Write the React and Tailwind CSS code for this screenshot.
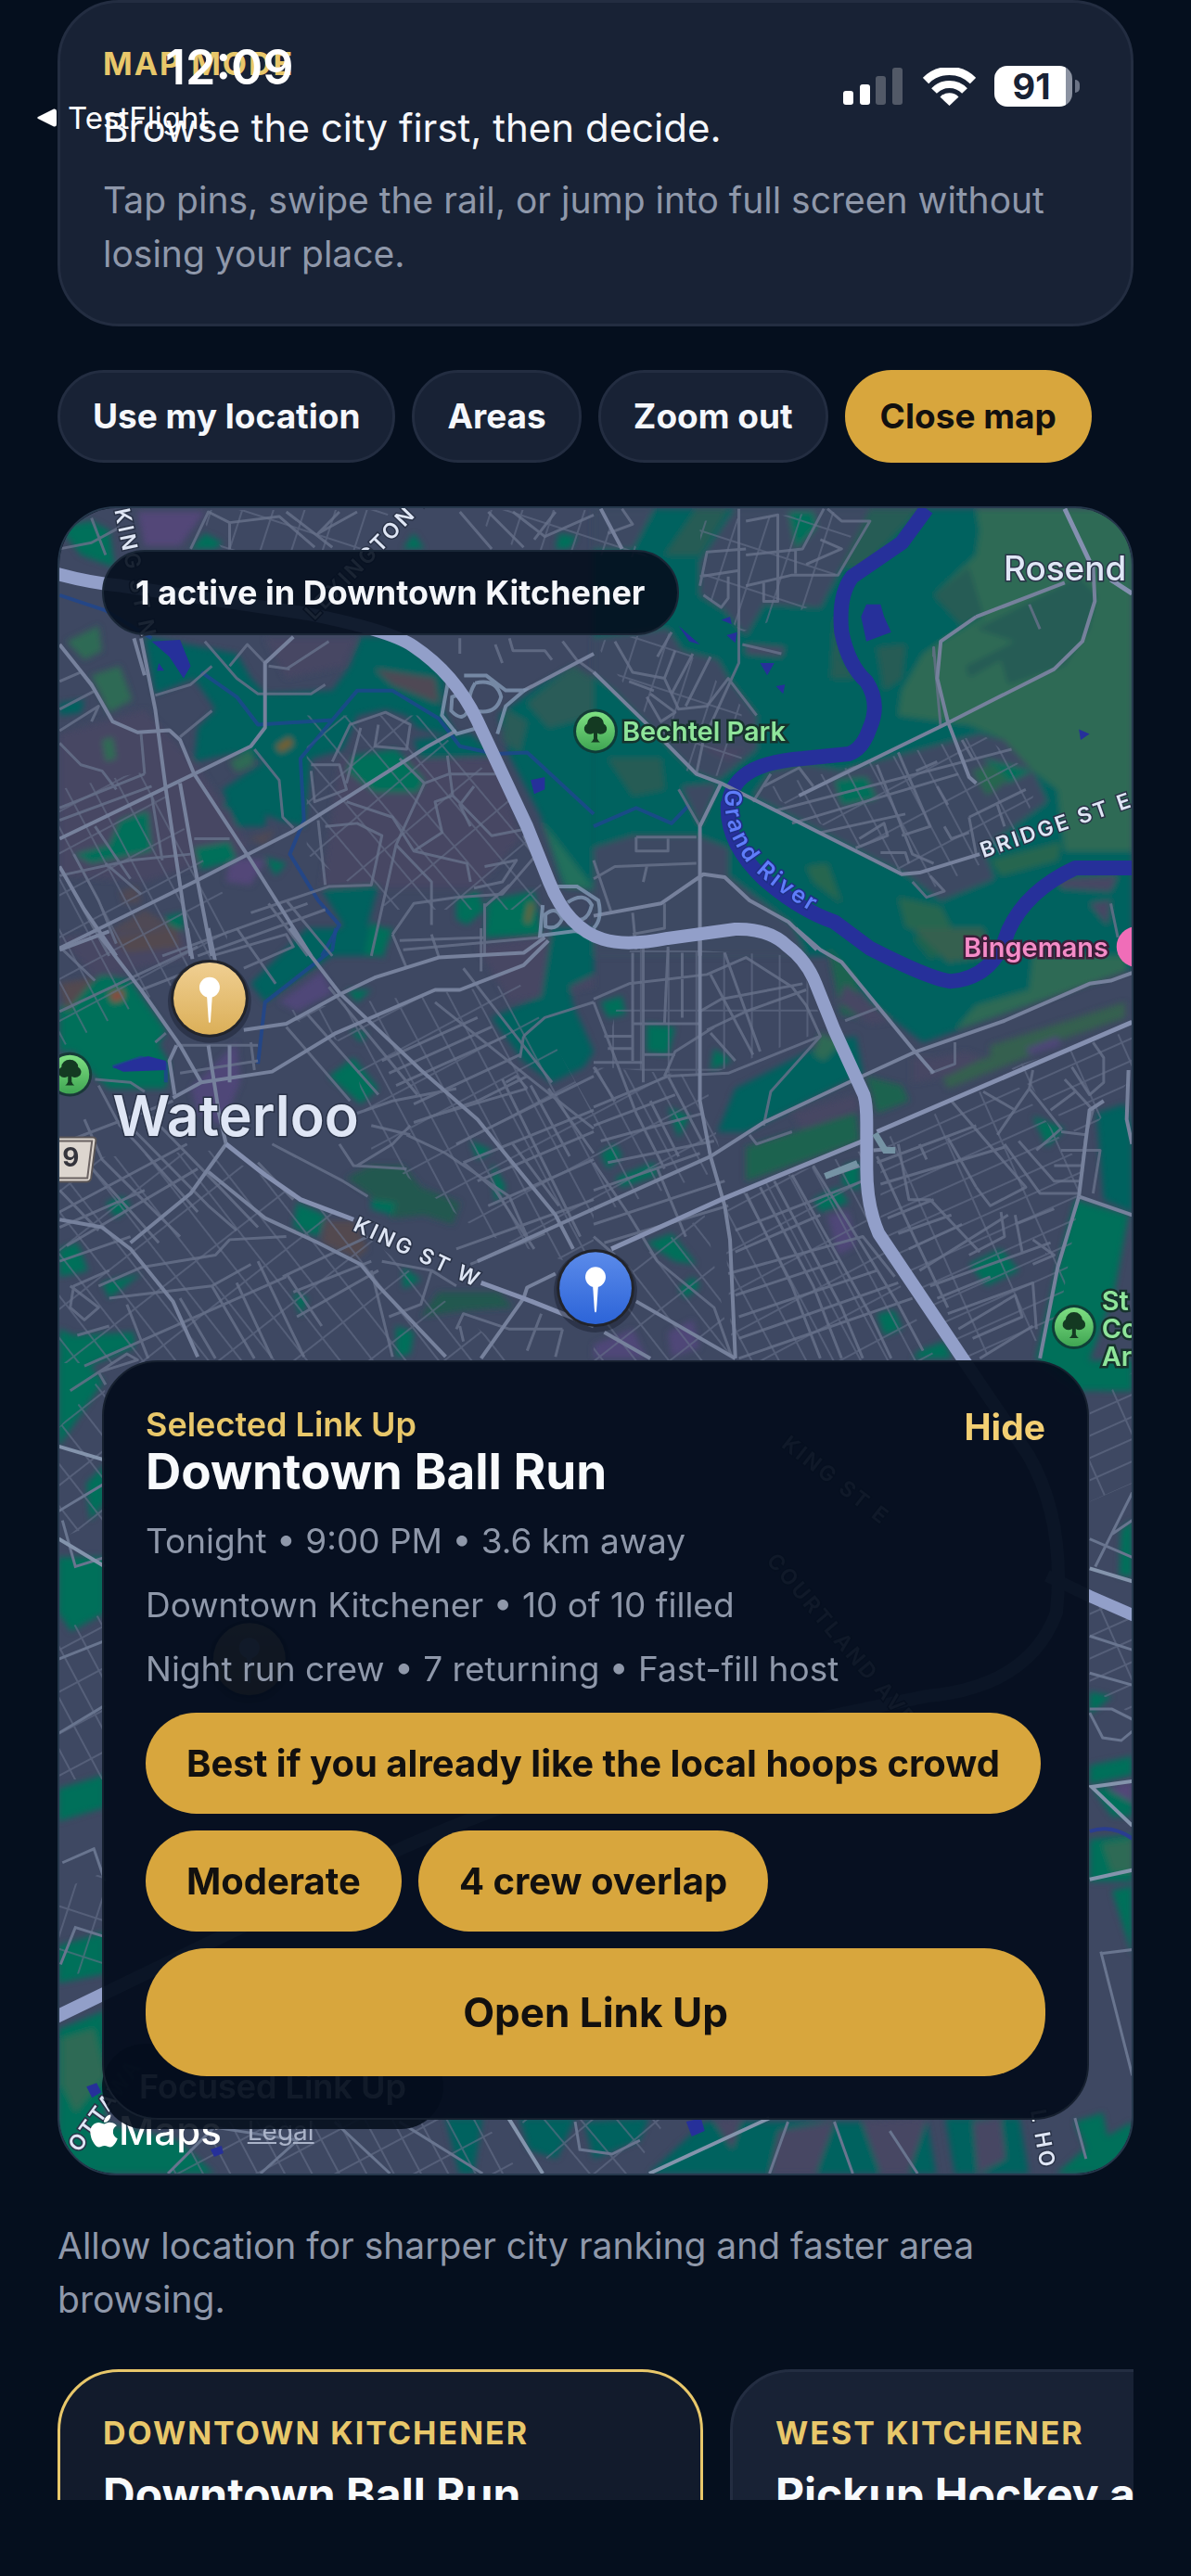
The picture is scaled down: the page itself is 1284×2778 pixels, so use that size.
import React from "react";
import { FaApple } from "react-icons/fa";

/* Each map tile is drawn on its own 1568 x 1500 grid and placed on the canvas. */
const TILES = {
  nw: "translate(40 530) scale(0.3827 0.3333)",
  ne: "translate(640 530) scale(0.3827 0.3333)",
  sw: "translate(40 1000) scale(0.3827 0.3333)",
  se: "translate(640 1000) scale(0.3827 0.3333)",
};

const TEAL = "#04625e";
const GREEN = "#06705a";
const FARM = "#2f6b55";
const SLATE = "#3e4862";
const MAUVE = "#464763";

const AREAS = {
  nw: [
    [MAUVE, "M60 780 L300 700 L460 900 L600 1150 L300 1260 L60 1240Z M640 470 L900 470 L860 560 L700 600Z M850 860 L1300 860 L1360 1120 L1240 1280 L800 1280Z"],
    ["#524678", "M280 60 H470 L400 170 H300Z M540 1180 L640 1190 L600 1270 L530 1260Z"],
    [GREEN, "M60 110 L150 90 L200 120 L215 240 L120 200Z M470 130 L520 160 L500 180 H430Z M1060 130 L1090 180 H1030Z M1470 130 L1520 140 L1500 180 H1460Z"],
    [TEAL, "M300 465 L560 520 L600 600 L640 650 L830 640 L880 560 L910 465 H1010 L1150 590 L1140 700 L1180 790 L1070 760 L1040 720 L980 700 L900 720 L860 830 L770 860 L750 1080 L680 1060 L600 1020 L520 1020 L560 930 L640 870 L560 840 L440 870 L450 760 L500 700 L440 600 L330 650Z"],
    [TEAL, "M1300 720 L1420 620 L1510 560 L1568 600 V1290 L1480 1270 L1420 1050 L1330 850Z"],
    [GREEN, "M890 850 L1010 830 L1090 930 L1070 970 L950 970 L870 900Z"],
    [TEAL, "M800 1285 L960 1270 L930 1400 L980 1500 H800 L860 1400Z M1060 800 L1220 780 L1290 850 L1080 860Z"],
    [GREEN, "M1270 1320 L1400 1290 L1420 1430 L1260 1440Z M1180 1320 L1240 1290 L1260 1350 L1210 1400 L1180 1380Z M940 1390 L990 1420 L970 1500 H920Z"],
    [GREEN, "M230 1060 L310 1030 L320 1160 L150 1200 L100 1170 L200 1140Z M440 1150 L540 1130 L560 1190 L460 1220Z M640 1180 L700 1200 L670 1240Z M360 1370 L410 1360 L410 1420 L370 1410Z"],
    [TEAL, "M520 960 L600 900 L650 930 L640 1080 L560 1080Z M60 680 L130 670 L120 710 L60 720Z"],
    [FARM, "M80 480 L170 430 L180 510 L130 540Z M150 590 L230 560 L265 670 L200 710Z M540 870 L600 830 L610 880 L560 905Z M180 800 L210 790 L220 860 L190 870Z"],
    ["#2b5c58", "M1380 680 L1510 560 L1568 600 V720 L1440 760Z M1320 700 L1380 740 L1360 840 L1310 800Z"],
    ["#4f4a55", "M200 1420 L300 1350 L400 1420 L300 1500 H210Z M590 1120 L670 1090 L640 1140Z M950 570 L1120 600 L1130 680 L1000 620Z M230 1290 L280 1270 L290 1330 L240 1330Z"],
    ["#24705c", "M1420 1060 L1568 1280 H1490Z"],
    ["#75602f", "M670 820 L710 790 L720 815 L685 840Z M1375 1390 L1385 1330 L1398 1330 L1385 1395Z"],
  ],
  ne: [
    [TEAL, "M0 50 H1520 V1500 H0Z"],
    [SLATE, "M0 50 H170 L110 180 H0Z M300 220 L400 50 H780 L690 260 L640 370 L480 360 L430 460 L370 380 L300 330Z"],
    [SLATE, "M0 470 L210 440 L250 510 L350 540 L380 600 L460 720 L460 830 L350 930 L280 900 L60 640 L0 590Z"],
    [SLATE, "M450 980 L500 900 L600 880 L700 900 L1090 780 L1160 800 L1240 900 L1280 1000 L1100 1150 L1130 1250 L980 1320 L890 1240Z"],
    [SLATE, "M0 1150 L110 1110 L290 1110 L380 1150 L380 1240 L560 1400 L600 1500 H0Z M250 950 L350 940 L300 1080Z"],
    [FARM, "M1080 50 H1520 V1160 L1330 1160 L1310 960 L1240 900 L1160 800 L1060 750 L860 720 L870 640 L930 520 L980 480 L1100 400 L960 330 L1080 200 L1090 120Z"],
    ["#265c55", "M1080 440 L1370 270 L1420 330 L1400 440 L1330 560 L1170 620 L1150 540 L1060 600 L1050 560 L1190 480Z M960 330 L1060 240 L1100 390 L1040 430Z M200 200 L290 50 H380 L300 200Z"],
    ["#265c55", "M800 500 L880 490 L870 600 L820 640Z M40 860 L190 860 L200 960 L110 980Z M680 380 L700 540 L740 600 L670 600Z M780 50 H920 L760 240 L700 240Z"],
    [GREEN, "M550 60 H620 L630 110 L570 180Z M1100 860 L1240 900 L1170 940Z M680 930 L770 920 L800 990 L700 1010Z"],
    ["#28664f", "M1070 900 L1130 880 L1170 930 L1110 980Z M600 1210 L660 1200 L700 1330 L620 1260Z M860 1310 L980 1340 L1050 1500 H920 L880 1400Z M1120 1190 L1320 1130 L1310 1190 L1150 1240Z"],
    [MAUVE, "M1310 1250 L1480 1240 L1460 1290 L1320 1280Z M1400 1330 L1460 1320 L1450 1400Z M430 490 L540 500 L530 530 L430 520Z M300 820 L430 830 L380 870Z"],
  ],
  sw: [
    [MAUVE, "M60 30 L400 0 L440 90 L160 160Z M1240 60 L1568 0 V190 L1330 240Z"],
    ["#504678", "M680 240 L800 140 L830 210 L730 270Z"],
    [GREEN, "M60 260 L180 150 L260 170 L360 330 L340 380 L370 440 L360 520 L200 520 L160 480 L100 400 L60 400Z"],
    [TEAL, "M760 0 H860 L840 80 L700 190 L640 240 L600 180Z M1450 0 H1568 V150 L1500 190 L1510 250 L1568 400 L1540 450 L1450 500 L1370 430 L1280 290 L1420 220Z"],
    [GREEN, "M820 480 L890 420 L960 520 L910 570Z M870 200 L940 200 L900 240Z M930 0 H1000 L970 100Z M880 330 L930 340 L910 370Z M1220 690 L1280 720 L1240 750Z M1280 760 L1320 840 L1290 890Z"],
    ["#24594f", "M870 810 L940 770 L1030 770 L1080 840 L1190 890 L1170 960 L1090 930 L1000 940 L930 860Z M1130 1180 L1300 1180 L1340 1230 L1200 1240 L1080 1260Z"],
    [GREEN, "M940 880 L1010 890 L1000 930 L940 910Z M730 890 L810 930 L790 1000 L720 970Z M190 890 L240 870 L260 900 L220 940Z M1030 1100 L1080 1140 L1030 1170Z"],
    [GREEN, "M60 1300 L100 1320 L270 1310 L270 1360 L160 1410 L90 1500 H60Z M60 1040 L110 1020 L140 1110 L60 1130Z M180 1150 L290 1120 L200 1200Z M720 1180 L760 1200 L740 1260Z M1010 1290 L1060 1310 L1050 1380 L1010 1390Z"],
    ["#524a50", "M60 180 L160 160 L80 270Z M810 950 L890 950 L930 1040 L900 1070 L800 1020Z M210 30 L390 0 L400 60 L250 80Z"],
    ["#504678", "M430 520 L560 370 L570 500 L520 640 L450 600Z"],
    ["#8a4a3c", "M200 210 L240 200 L240 230 L210 240Z"],
  ],
  se: [
    [TEAL, "M560 0 H1520 V130 L930 370 L780 240 L660 70Z M350 660 L400 520 L640 380 L740 350 L760 470 L430 660Z M1420 600 L1500 570 L1520 650 V920 L1440 880Z"],
    ["#1d6350", "M660 60 L740 160 L760 290 L700 280Z M430 710 L740 600 L750 690 L430 820Z M770 480 L870 510 L890 560 L800 600Z M900 30 L1050 0 L1050 60 L950 100Z"],
    [FARM, "M1020 330 L1080 250 L1230 200 L1240 90 L1500 90 L1500 140Z M640 340 L700 370 L650 430 L620 410Z"],
    ["#35604f", "M1120 380 L1500 240 L1500 290 L1120 440Z M980 470 L1240 370 V410 L1000 520Z M900 0 L1100 0 L1120 90 L1000 110Z"],
    [MAUVE, "M900 420 L960 420 L1050 400 L1100 420 L1000 480 L900 500Z M560 600 L740 540 L750 590 L590 650Z M710 180 L840 300 L780 310 L690 240Z"],
    ["#4f4678", "M1220 390 L1310 350 L1320 380 L1230 410Z M660 930 L720 920 L740 1030 L690 1060Z M210 1310 L280 1270 L300 1360 L220 1390Z M0 1350 L110 1300 L150 1395 H0Z"],
    [GREEN, "M60 810 L170 760 L180 800 L80 840Z M20 730 L60 700 L80 740 L40 780Z M150 1020 L220 990 L290 1090 L230 1080Z M620 880 L690 840 L720 890 L640 920Z M1060 1090 L1150 1040 L1200 1110 L1110 1160Z"],
    [GREEN, "M1360 880 L1510 930 L1470 1180 L1400 1400 L1520 1440 V1500 H1370 L1250 1395 L1320 1050Z M1240 610 L1330 650 L1280 710Z M150 310 L230 320 L210 410 L150 400Z M340 390 L390 430 L330 460Z M920 1370 L990 1340 L1010 1395 H900Z"],
    [GREEN, "M210 580 L270 610 L240 680Z M240 1170 L280 1130 L300 1160 L260 1200Z M800 1250 L850 1240 L870 1300 L820 1320Z M20 240 L80 220 L90 280 L40 290Z M710 770 L750 760 V850 L700 830Z"],
  ],
};

/* [pattern, polygon] pairs: neighbourhoods filled with a street grid, canvas units. */
const BLOCKS = [
  ["streets-a", "62,850 160,830 250,980 240,1030 62,1130"],
  ["streets-c", "210,548 420,548 400,592 240,592"],
  ["streets-c", "500,548 640,548 700,600 560,592"],
  ["streets-d", "330,770 450,770 560,860 590,980 420,980 330,920"],
  ["streets-b", "62,1250 230,1240 380,1320 560,1470 62,1470"],
  ["streets-a", "300,1090 560,1060 640,1200 640,1370 520,1330 400,1240 380,1130"],
  ["streets-c", "754,560 930,548 900,620 880,650 800,680 760,640"],
  ["streets-c", "640,690 720,680 800,760 800,840 740,830"],
  ["streets-a", "820,850 1060,790 1120,840 1100,910 1000,960 960,930"],
  ["streets-e", "680,1020 860,1030 890,1110 760,1160 650,1150"],
  ["streets-a", "640,1150 760,1160 780,1260 640,1310"],
  ["streets-a", "780,1290 930,1240 940,1320 1010,1467 790,1467"],
  ["streets-f", "950,1230 1090,1160 1170,1260 1140,1440 1040,1467 950,1330"],
  ["streets-b", "640,1390 760,1310 790,1467 640,1467"],
  ["streets-f", "1090,1150 1222,1110 1222,1160 1170,1230"],
  ["streets-b", "62,1540 112,1480 112,1640 62,1660"],
  ["streets-a", "62,1760 112,1740 112,1920 62,1920"],
  ["streets-c", "62,2040 112,2020 112,2130 62,2130"],
  ["streets-f", "1176,1520 1222,1480 1222,1600 1176,1620"],
  ["streets-f", "1176,1730 1222,1740 1222,1850 1176,1820"],
  ["streets-a", "180,2346 230,2290 520,2286 560,2346"],
  ["streets-d", "560,2286 720,2286 680,2346 600,2346"],
];

const WATER = {
  nw: "M60 330 L190 380 L320 470 M460 580 L560 660 L620 750 L830 735 L900 640 L1000 640 L1130 730 L1190 820 L1290 845 L1380 840 L1568 1040 M830 735 L740 860 L750 1060 L710 1170 L790 1320 L850 1400 L800 1500",
  ne: "M0 1080 L120 1020 L220 1070 L270 1010",
  sw: "M840 0 L830 70 L640 240 L620 440 M210 450 L290 420 L360 440 L360 500",
};

const LOCAL_ROADS = {
  nw: [
    "M60 180 L150 160 L230 110 M150 80 L190 200 M430 180 L480 60 L540 95 L680 75 L780 175 M540 180 V95 M700 60 L830 175 M850 60 L790 130 L900 60",
    "M470 480 L560 600 L620 650 H770 L810 620 M540 560 L590 490 L640 550 M700 570 L820 480 M650 560 L710 570 M330 655 L430 620 L490 560 M400 790 L490 705",
    "M60 610 L120 580 L160 640 L60 700 M60 770 L170 690 L150 740 M60 810 L120 880 L180 900 L220 960 M60 1020 L300 910 M60 1060 L320 950 M290 780 L300 910",
    "M610 830 L680 930 L690 1050 L720 1085 M770 880 L850 880 L870 960 L780 1000 L770 900 M830 870 L880 750 L980 710 L1050 750 L1040 830 L950 820 L960 750 M870 940 L910 760",
    "M1020 860 L1090 940 L1160 910 H1290 M1155 850 L1170 980 L1120 1000 L1140 1100 L1060 1160 M1090 940 L1010 1140 L940 1500 M1170 980 L1280 1110 L1370 1090 M1230 950 L1190 1010 L1220 1080",
    "M790 1060 L810 1270 M870 1000 L1000 1050 L1060 1160 L1210 1200 L1220 1260 M810 1080 L900 1070 L970 1110 L940 1270 L820 1275 L600 1360 M1010 1140 L1110 1260 L1110 1400 M1260 1210 L1350 1190 L1310 1260 L1230 1280 M1370 1110 L1400 1180 L1310 1300 L1180 1310 L1060 1330 L1000 1430",
    "M60 1240 L260 1190 L430 1170 M100 1170 L170 1320 L220 1460 M190 1200 L290 1300 M160 1080 L260 1250 M320 980 L350 1190 M60 1210 L200 1500 M350 1500 L760 1330 M450 1500 L810 1350 M650 1330 L760 1500 M700 1320 L830 1500 M440 1120 H540",
    "M1190 60 L1280 180 M1270 60 L1370 175 M1340 60 L1430 140 L1568 70 M1400 150 L1460 60 M1480 480 L1520 540 L1568 580 M1190 470 V520 M1290 490 L1310 550 M1330 470 L1340 510 H1430 L1450 540",
    "M1260 1330 V1500 M1020 1450 L1260 1440 M1330 1270 L1260 1340 M1030 1480 L1420 1440",
  ],
  ne: [
    "M410 50 V550 L310 800 L290 910 M80 50 L110 100 L40 130 M300 270 L410 250 M300 300 L320 190 L430 180 M430 90 L520 70 V350 H480 V290 M430 200 L590 180 L650 50 M430 300 L560 265 H690 L780 90 H700 L660 50 M570 180 V260 M640 150 L700 180 L600 230 M310 330 L360 370 L380 340 V270",
    "M60 480 L110 580 L200 600 L240 700 L320 690 L380 600 L460 720 M100 610 L170 640 M180 530 L220 450 M230 510 L200 600 M280 520 L220 650 M330 530 L260 690 M160 650 L230 710 L190 740 L150 660 M420 490 L530 520",
    "M480 950 L580 890 L620 950 M450 1000 L500 910 M510 1030 L1180 830 M560 1070 L1030 910 M640 1100 L880 1040 M800 880 L900 1170 L960 1200 M860 840 L950 1080 L870 1110 M910 900 L970 870 M1040 800 L1070 860 M970 950 L1000 1010 M1060 1050 L1220 960 M1060 1050 L1080 1170 M1140 1010 L1160 1080 M750 1120 L820 1070 L830 1110 L740 1150 M810 1165 H880 L890 1200 M990 1080 L1010 1120 L1060 1100",
    "M120 1115 H290 M120 1115 V1160 H210 V1120 M0 1250 L60 1210 L290 1200 M150 1210 L140 1260 M0 1190 L50 1360 M240 960 L300 1080 M110 1360 L120 1480 M200 1330 V1410 L110 1430 M900 1260 L940 1310 L990 1290 L950 1240 M960 530 V500 L980 760 M1230 360 L1260 440 M1460 1330 L1480 1440",
  ],
  sw: [
    "M60 60 L160 170 M60 270 L450 60 M290 200 L470 120 M490 90 L700 20 L720 60 L580 130 M560 0 L670 180 M330 370 L360 340 M390 380 H620 M400 470 L620 430 M600 370 L610 460 M160 490 L260 500 L300 530",
    "M60 700 L380 560 M60 920 L420 700 M60 970 L300 850 M80 1030 L450 780 M60 1080 L260 1000 M170 1160 L290 1100 L500 1060 L540 1010 L700 1000 M110 1320 L200 1290 M200 1200 L490 1160 L600 1090 M130 1420 L700 1130 M90 1500 L250 1380 L280 1400 L170 1440 L190 1480",
    "M170 510 L230 640 L280 700 L450 920 M240 620 L480 900 L560 980 M300 590 L520 850 L620 970 M130 620 L180 750 L400 1000 M90 700 L340 1020 M60 850 L170 980 M90 1160 L170 1230 L130 1270 L90 1230 L100 1160 L200 1110 M250 1220 L310 1395 M400 1200 L500 1395 M490 1160 L610 1395 M560 1150 L660 1395",
    "M660 700 L860 820 L930 870 M620 760 L720 880 M850 700 L890 770 L1040 780 M1050 640 L1000 700 L900 770 M1060 630 L1240 560 L1380 480 M1040 670 L1150 730 L1330 870 L1380 1000 M900 600 L1000 560 L1180 520 M940 640 L1050 670",
    "M820 190 L1070 540 M760 280 L960 540 M700 320 L880 560 M1120 240 L1380 480 L1568 650 M1200 130 L1450 500 M970 430 L1240 290 M990 470 L1280 320 M1010 510 L1320 350 M1060 570 L1360 410 M1110 610 L1380 520 M1000 20 L1040 130 M1110 20 L1130 90 M1250 0 V140",
    "M1180 700 L1568 480 M1200 760 L1568 590 M1240 820 L1568 660 M1270 900 L1568 750 M1180 1040 L1568 880 M1220 1090 L1430 990 M1310 490 L1400 700 L1530 1000 M1390 510 L1500 740 M1320 500 L1350 480 L1380 520 M1440 520 L1568 730 M1200 760 L1290 850 L1400 1040 M1340 700 L1470 900",
    "M690 1130 L930 1000 M720 1180 L940 1080 M730 1260 L960 1110 M700 1120 L800 1290 M940 1110 L1000 1390 M1180 1300 L1200 1250 L1330 1300 L1480 1300 M1200 1340 L1190 1290 M970 1080 L1110 1110 L1180 1160 M990 1260 L1080 1220 L1110 1110 M1420 1250 L1380 1370 M1480 1300 L1460 1390 M620 1080 L750 1390 M1370 350 L1430 290 L1568 240 M1360 420 L1370 350",
  ],
  se: [
    "M0 230 L100 180 L320 150 L430 95 L560 190 L600 250 L640 350 L500 530 L480 640 M110 80 V430 M140 60 V500 M210 60 L200 310 M250 80 V290 M110 310 H300 M140 410 H230 M30 350 H110 M40 390 H110 M0 435 H140",
    "M0 240 L120 600 L200 780 M0 450 L60 560 M210 480 L310 700 M160 560 L240 740 M210 480 L380 470 L640 350 M300 270 L360 230 L590 180 M320 330 L430 270 L600 200 M330 150 L450 410 M370 80 L470 400 M330 340 L400 430 M200 480 L230 400 L340 320",
    "M0 580 L210 480 M0 640 L230 540 M20 690 L310 600 M40 760 L340 690 M0 850 L300 730 M0 960 L370 820 M30 1020 L380 900 M0 760 L100 930 L180 1080 L340 1230 L390 1390 M180 780 L260 1000 M0 1000 L60 1060",
    "M430 860 L560 1160 L640 1395 M470 840 L620 1160 L700 1395 M510 820 L700 1230 L760 1395 M560 800 L780 1250 L840 1395 M620 770 L860 1220 L930 1370 M400 980 L760 820 M400 1050 L640 930 M380 1120 L760 1000 L850 1130 M400 1190 L690 1080 M410 1260 L800 1110 M410 1330 L860 1150 M410 1395 L900 1200",
    "M800 740 L900 990 L1000 1230 M860 700 L890 880 L950 880 L1090 1050 M920 700 L940 750 M1000 680 L1080 840 M800 760 L1080 640 M810 830 L1160 710 M830 940 L960 880 M860 990 L1010 930 M890 1040 L1040 960 M920 1110 L1170 930 M950 1160 L1290 1020 M970 1200 L1120 1130 M1000 1250 L1240 1150 L1250 1300",
    "M1160 700 L1260 860 H1370 M1200 690 L1300 820 H1370 M1010 560 L1220 840 L1120 900 L1080 840 M1100 530 L1190 590 M1240 460 L1230 520 L1140 670 M1230 520 L1320 650 L1250 720 M1330 490 L1410 590 L1390 670 L1320 660 M1290 590 L1360 530 M1350 450 L1400 540 L1440 500 V420 L1410 370 M1320 720 H1430 L1410 860 M1390 670 L1370 860 M1300 770 H1380",
    "M1030 1300 L1190 1190 L1210 1260 L1070 1330 M1150 920 L1160 1000 L1060 1060 M1190 930 L1210 1050 M1300 910 L1190 960 M1240 1010 L1300 1060 L1240 1090 M1090 1395 L1240 1290 M950 470 L1020 440 V370 M440 670 L460 700 L560 660 M710 300 L800 260",
  ],
};

const MAIN_ROADS = {
  nw: [
    "M60 490 L150 620 L210 740 L280 775 L370 768 L400 800 L440 910 L600 1190 L770 1500",
    "M290 470 L330 700 L360 960 L430 1500 M400 940 L440 1200 L490 1500 M270 470 L300 590",
    "M60 1120 L440 910 L600 820 L640 760 V550 L720 465",
    "M60 1475 L440 1260 L720 1095 L880 980 L1100 820 L1180 770",
    "M60 1210 L130 1350 L220 1500 M1370 640 L1568 520",
  ],
  ne: [
    "M20 50 L80 180 M0 580 L170 770 L290 910 L360 940 L430 980 L870 1235 L920 1230 L1090 1170",
    "M360 940 L300 1080 V1500 M0 1370 L190 1330 L310 1235 L370 1245 L440 1320 L550 1390 L630 1480",
    "M1080 400 L980 480 L970 600 L1000 740 M580 980 L990 750 L1300 570 L1380 480 L1415 350 L1410 230 M1330 290 L1080 400 M1000 740 L1060 920 L1080 940",
  ],
  sw: [
    "M60 70 L200 10 M170 20 L290 200 L400 380 L460 500 M420 0 L435 100 M480 0 L500 110",
    "M710 0 L850 210 L1080 460 L1240 620 L1310 720 L1460 930 L1510 1040",
    "M580 330 L700 310 L850 215 L950 160 L1130 95 L1370 80 L1430 30",
    "M380 550 L460 500 L660 465 L840 340 L1120 200 L1190 200 L1370 120 L1440 40",
    "M390 380 L370 430 L385 540 M480 380 L510 600 L530 700 M540 380 V500 M530 700 L430 860 L260 1020 M60 945 L180 970 L260 1040 L380 1210 L450 1390",
    "M480 790 L640 940 L790 1020 L910 1090 L960 1160 L1150 1390 M1240 1080 L1568 910 M1370 1200 L1380 1165 L1460 1120 M1370 1200 L1250 1395",
  ],
  se: [
    "M300 30 V560 L330 740 L370 900 L385 1010 L400 1395 M570 0 L640 70 L700 110 L900 390 L960 470",
    "M0 910 L330 740 L480 630 L720 500 L910 400 L1160 300 L1400 180 L1460 170 L1520 145",
    "M1370 870 L1520 930 M1370 870 L1400 590 L1440 560 M1370 870 L1310 1100 L1260 1395 M1510 460 L1505 620 L1520 700",
    "M120 1210 L400 1395 M30 1310 L160 1395 M660 805 L750 770 M790 720 L850 715",
  ],
};

const ARTERIALS = {
  sw: "M530 700 L640 800 L740 880 L890 945 M1250 1150 L1370 1200 L1568 1290",
  se: "M50 1040 L360 880 L760 690 M800 660 L1520 305",
  ne: "M1330 50 L1400 220 M1460 280 L1520 325",
};

function Roads({ data, stroke, width, opacity }) {
  return Object.entries(data).map(([tile, paths]) => (
    <g key={tile} transform={TILES[tile]} fill="none" stroke={stroke} strokeWidth={width} opacity={opacity} strokeLinejoin="round">
      {[].concat(paths).map((d) => (
        <path key={d} d={d} vectorEffect="non-scaling-stroke" />
      ))}
    </g>
  ));
}

function StreetPattern({ id, angle, w, h }) {
  return (
    <pattern id={id} width={w} height={h} patternUnits="userSpaceOnUse" patternTransform={`rotate(${angle})`}>
      <path d={`M0 1H${w}M1 0V${h}`} stroke="#667089" strokeWidth="2" opacity="0.6" />
    </pattern>
  );
}

function TreePoi({ x, y }) {
  return (
    <g transform={`translate(${x} ${y})`}>
      <circle r="24" fill="#12352f" opacity="0.8" />
      <circle r="21" fill="url(#poi-green)" />
      <path d="M-11 1a6 6 0 0 1 2-9a9 8 0 0 1 18 0a6 6 0 0 1 2 9q-5 4-9 1l0 6q1 3 3 4h-10q2-1 3-4v-6q-5 3-9-1Z" fill="#143a22" />
    </g>
  );
}

function Pin({ x, y, fill }) {
  return (
    <g transform={`translate(${x} ${y})`}>
      <circle r="45" cy="3" fill="#0b1220" opacity="0.35" />
      <circle r="42" fill="#22242b" />
      <circle r="39" fill={`url(#${fill})`} />
      <circle r="11" cy="-12" fill="#fff" />
      <path d="M-3 -4H3L1 25Q0 28 -1 25Z" fill="#fff" />
    </g>
  );
}

function CityMap() {
  const halo = { stroke: "#2a3348", strokeWidth: 3, paintOrder: "stroke" };
  return (
    <svg className="absolute inset-0 h-full w-full" viewBox="62 546 1160 1800" preserveAspectRatio="xMidYMid slice" role="img" aria-label="Map of Waterloo and Kitchener">
      <defs>
        <StreetPattern id="streets-a" angle={-28} w={26} h={40} />
        <StreetPattern id="streets-b" angle={-38} w={28} h={50} />
        <StreetPattern id="streets-c" angle={18} w={32} h={44} />
        <StreetPattern id="streets-d" angle={50} w={46} h={30} />
        <StreetPattern id="streets-e" angle={0} w={30} h={64} />
        <StreetPattern id="streets-f" angle={-24} w={54} h={22} />
        <linearGradient id="poi-green" x1="0" y1="0" x2="0" y2="1">
          <stop offset="0" stopColor="#7fe083" />
          <stop offset="1" stopColor="#3fa552" />
        </linearGradient>
        <linearGradient id="pin-gold" x1="0" y1="0" x2="0" y2="1">
          <stop offset="0" stopColor="#f0cf92" />
          <stop offset="1" stopColor="#dbaf58" />
        </linearGradient>
        <linearGradient id="pin-blue" x1="0" y1="0" x2="0" y2="1">
          <stop offset="0" stopColor="#5b8bea" />
          <stop offset="1" stopColor="#2c64d8" />
        </linearGradient>
        <filter id="soft"><feGaussianBlur stdDeviation="3" /></filter>
        <path id="grand-river" d="M783 850 Q777 890 805 928 Q832 960 900 996" />
      </defs>

      <rect x="62" y="546" width="1160" height="1800" fill={SLATE} />
      <g filter="url(#soft)">
        {Object.entries(AREAS).map(([tile, list]) => (
          <g key={tile} transform={TILES[tile]}>
            {list.map(([fill, d]) => (
              <path key={d} d={d} fill={fill} />
            ))}
          </g>
        ))}
        <path fill={GREEN} d="M62 1467H90L110 1490L62 1560Z M92 1600L112 1580V1620L96 1640Z M62 1680H112V1740L75 1760L62 1740Z M62 1930L112 1915V1950L62 1965Z M62 2100L112 2085V2130L62 2140Z M62 2190L112 2170V2346H62Z M100 2290L190 2310L230 2346H100Z" />
        <path fill={FARM} d="M66 2200L100 2190L112 2240L80 2280L66 2250Z" />
        <path fill={GREEN} d="M1180 1467H1222V1500H1190Z M1210 1650L1222 1640V1700H1208Z M1176 1825L1200 1830L1176 1850Z M1176 1905L1222 1895V1915L1176 1925Z M1180 1930L1222 1925V1960H1200Z M1176 1985L1222 1980V2030L1176 2030Z M1200 2040L1222 2035V2110Z M1170 2320L1222 2290V2346H1140Z M1160 2290L1190 2280L1196 2310L1172 2320Z" />
        <path fill={FARM} d="M1190 1990L1222 1985V2020H1200Z" />
        <path fill="#524678" d="M1195 1930L1222 1922V1945Z" />
        <path fill={TEAL} d="M480 2286H520L510 2346H495Z M560 2286H620L600 2330L570 2320Z M630 2290L700 2286L690 2310L640 2330Z M760 2290H1000L1010 2346H700Z M1020 2286H1100L1110 2346H1030Z" />
        <path fill={MAUVE} d="M770 2290L800 2286L790 2320Z M840 2300L900 2290L880 2346H830Z M930 2290L1000 2286L980 2346H950Z M1050 2290L1080 2286L1085 2330L1055 2346Z" />
      </g>

      {BLOCKS.map(([fill, points]) => (
        <polygon key={points} points={points} fill={`url(#${fill})`} />
      ))}

      <Roads data={WATER} stroke="#1f4790" width="4" opacity="0.8" />
      <g transform={TILES.ne} fill="none" stroke="#26309a" strokeLinejoin="round">
        <path vectorEffect="non-scaling-stroke" strokeWidth="16" d="M940 50 L870 160 L730 270 Q690 330 700 450 Q720 560 770 610 Q810 680 780 760 Q760 830 720 845 L590 860 Q470 870 420 920 Q380 960 380 1030" />
        <path vectorEffect="non-scaling-stroke" strokeWidth="16" d="M380 1000 Q370 1130 480 1250 Q580 1350 680 1390 L780 1475 Q960 1580 1010 1582 Q1130 1570 1170 1420 Q1220 1290 1360 1215 H1520" />
        <path fill="#26309a" stroke="none" d="M770 360 L810 360 L820 400 L840 450 L770 480 L755 400Z M360 410 L385 400 L390 425Z M375 460 L405 450 L400 485Z M470 550 L510 550 L490 590Z M515 625 L540 620 L535 650Z M240 430 L300 490 L270 480Z M1370 765 L1400 780 L1375 800Z" />
      </g>
      <g transform={TILES.nw} fill="#26309a">
        <path d="M320 480 L400 475 L430 560 L410 600 L370 530Z M340 550 L355 575 L335 575Z M1390 930 L1430 920 L1430 960 L1400 975Z" />
      </g>
      <g transform={TILES.sw} fill="#26309a">
        <path d="M210 450 L260 430 L310 415 L360 430 V460 L240 465Z" />
      </g>
      <path fill="#26309a" d="M92 2252L103 2248L108 2258L98 2264Z M226 2320L238 2316L240 2324L230 2328Z M740 2290L756 2286L760 2300L746 2306Z" />
      <path fill="none" stroke="#2a3d90" strokeWidth="4" d="M1176 1976Q1200 1968 1222 1984" />

      <Roads data={LOCAL_ROADS} stroke="#667089" width="3" opacity="0.85" />
      <Roads data={MAIN_ROADS} stroke="#76819c" width="4" opacity="1" />
      <Roads data={ARTERIALS} stroke="#8590b0" width="5" opacity="1" />

      <g fill="none" stroke="#69758f" strokeWidth="3">
        <path d="M62 1630L112 1600 M66 1640L80 1690L112 1680 M62 1790L112 1770 M62 1870L112 1840 M66 2010L100 1995L112 2030 M64 2120L80 2080L112 2090" />
        <path d="M1176 1660L1222 1680 M1182 1690L1222 1610 M1176 1765L1222 1780 M1176 1805L1222 1818 M1176 1844H1200L1222 1855 M1176 1848L1190 1875L1210 1878L1222 1868 M1200 1655L1222 1640 M1160 2286L1172 2330 M1190 2108L1222 2104 M1188 2106L1222 2240" />
        <path d="M180 2346L230 2296L320 2310L280 2346 M360 2290L420 2346 M430 2290L520 2346 M620 2290L625 2320L660 2325L690 2310 M850 2290L830 2346 M900 2290L920 2346 M960 2300L990 2346" />
      </g>
      <g fill="none" stroke="#8494ac" strokeWidth="4">
        <path d="M1176 1692L1222 1706 M1222 1922L1178 1928L1222 1970 M1176 2028L1222 2018" />
        <path d="M548 2286L585 2346 M700 2346L830 2286" />
        <path d="M62 1560L112 1575 M62 1660L112 1690" />
      </g>

      <g fill="none" stroke="#7f94b0" strokeWidth="4" opacity="0.85">
        <path d="M484 726L476 770L492 790L520 782 M500 727H524L545 743H565L545 760L536 790 M512 735Q500 755 512 765Q535 770 540 750Q535 730 512 735 M487 750Q500 745 506 760Q500 780 486 765Z" />
        <path d="M600 955H622L645 970Q650 990 640 1000 M585 975L582 1008L620 1003L645 1012 M612 972Q630 960 638 975Q632 1000 612 985 M588 985Q600 975 606 990Q600 1003 588 998Z" />
      </g>
      <g fill="none" stroke="#929fc9" strokeLinejoin="round">
        <path strokeWidth="14" d="M50 614Q90 626 130 630L330 660Q420 678 445 695Q490 725 514 775L568 890L592 950Q612 1000 650 1012Q675 1020 720 1011L793 1001Q830 1000 850 1020Q870 1035 880 1060L900 1110L932 1180Q935 1190 935 1210V1260Q935 1300 948 1330L1040 1467L1110 1570Q1150 1640 1140 1740Q1110 1820 1000 1830L760 1880Q500 1950 300 2060L40 2186" />
        <path strokeWidth="13" d="M1130 1700L1176 1722L1240 1750" />
      </g>
      <path fill="none" stroke="#7593a4" strokeWidth="7" d="M890 1268L925 1254M944 1222L955 1240H966" />

      <g fontFamily="Inter, sans-serif" fontWeight="600" fill="#dfe6f5">
        <text x="120" y="1225" fontSize="61" {...halo}>Waterloo</text>
        <text x="1083" y="624" fontSize="37" fontWeight="500" {...halo}>Rosend</text>
        <g fontSize="23" letterSpacing="3" {...halo}>
          <text transform="translate(379 1326) rotate(25)">KING ST W</text>
          <text transform="translate(1061 924) rotate(-19)">BRIDGE ST E</text>
          <text transform="translate(122 548) rotate(78)">KING ST N</text>
          <text transform="translate(338 668) rotate(-46)">LEXINGTON RD</text>
          <text transform="translate(842 1560) rotate(38)">KING ST E</text>
          <text transform="translate(826 1684) rotate(50)">COURTLAND AVE</text>
          <text transform="translate(84 2324) rotate(-54)">OTTAWA</text>
          <text transform="translate(1112 2278) rotate(80)">L HO</text>
        </g>
        <text fontSize="25" fill="#5f7dfa" letterSpacing="3" stroke="#1f2f86" strokeWidth="3" paintOrder="stroke">
          <textPath href="#grand-river">Grand River</textPath>
        </text>
        <g fontSize="29" fill="#8fe59a" stroke="#17332d" strokeWidth="5" paintOrder="stroke">
          <text x="671" y="798">Bechtel Park</text>
          <text x="1189" y="1413">St</text>
          <text x="1189" y="1443">Co</text>
          <text x="1189" y="1473">Ar</text>
        </g>
        <text x="1040" y="1031" fontSize="29" fill="#f58cc8" stroke="#3d1f3a" strokeWidth="5" paintOrder="stroke">Bingemans</text>
      </g>

      <circle cx="1227" cy="1020" r="22" fill="#f06db8" />
      <TreePoi x={642} y={787} />
      <TreePoi x={74} y={1158} />
      <TreePoi x={1159} y={1431} />
      <path d="M50 1226H99Q103 1226 102 1231L97 1270Q96 1274 92 1274H50Z" fill="#ddd6cf" stroke="#5a5556" strokeWidth="2" />
      <path d="M50 1230H98L93 1270H50" fill="none" stroke="#6a6262" strokeWidth="2" />
      <text x="66" y="1258" fontFamily="Inter, sans-serif" fontSize="28" fontWeight="700" fill="#34343c">9</text>
      <Pin x={225} y={1076} fill="pin-gold" />
      <Pin x={642} y={1389} fill="pin-blue" />
      <Pin x={268} y={1790} fill="pin-gold" />
    </svg>
  );
}

function StatusBar() {
  return (
    <div className="absolute inset-x-0 top-0 z-10 flex justify-between pt-[44px] pr-[120px] pl-10 text-white">
      <div>
        <p className="ml-[138px] text-[52px] leading-[58px] font-semibold">12:09</p>
        <a href="#testflight" className="mt-1 flex items-center gap-3 text-[33px] leading-[42px]">
          <svg className="h-5 w-[21px]" viewBox="0 0 21 20" fill="currentColor" aria-hidden="true">
            <path d="M1 9L18 0.500Q21 0 21 3V17Q21 20 18 19.500L1 11Q-0.500 10 1 9Z" />
          </svg>
          TestFlight
        </a>
      </div>
      <div className="mt-[27px] flex h-11 items-center">
        <svg className="h-10 w-16" viewBox="0 0 64 40" fill="#fff" aria-label="Signal: 2 of 4 bars">
          <rect x="0" y="25" width="11" height="15" rx="3" />
          <rect x="18" y="18" width="11" height="22" rx="3" />
          <rect x="35" y="9" width="11" height="31" rx="3" opacity="0.25" />
          <rect x="53" y="0" width="11" height="40" rx="3" opacity="0.25" />
        </svg>
        <svg className="ml-[22px] h-[41px] w-[57px]" viewBox="0 0 57 41" fill="none" stroke="#fff" aria-label="Wi-Fi">
          <path d="M3 14A36 36 0 0 1 54 14" strokeWidth="9" />
          <path d="M12 25A23 23 0 0 1 45 25" strokeWidth="8" />
          <path d="M28.500 41L18.500 31.500A14 14 0 0 1 38.500 31.500Z" fill="#fff" stroke="none" />
        </svg>
        <div className="ml-5 flex h-11 w-[84px] items-center justify-center rounded-[14px] bg-[linear-gradient(90deg,#fff_92%,#8b92a1_92%)] pr-1 text-[38px] leading-none font-bold text-[#182235]">
          91
        </div>
        <span className="ml-[3px] h-[14px] w-[5px] rounded-r-full bg-[#6b7385]" />
      </div>
    </div>
  );
}

function Chip({ primary, children }) {
  return (
    <button
      type="button"
      className={
        primary
          ? "h-[100px] rounded-full bg-[#d8a63d] px-[38px] text-[37px] font-bold text-[#12100f]"
          : "h-[100px] rounded-full border-[3px] border-[#232d41] bg-[#182235] px-[35px] text-[37px] font-bold text-[#f5f7fb]"
      }
    >
      {children}
    </button>
  );
}

function Tag({ children }) {
  return (
    <li className="flex h-[109px] items-center rounded-full bg-[#d8a63d] px-11 text-[40px] font-bold text-[#12100f]">{children}</li>
  );
}

function SelectedPanel() {
  return (
    <section className="relative mx-[46px] mt-auto mb-[58px] rounded-[60px] border-2 border-[#16202f] bg-[#040e1e]/95 p-[45px]">
      <div className="flex items-start justify-between">
        <div>
          <p className="text-[36px] leading-[44px] font-semibold text-[#e8c76a]">Selected Link Up</p>
          <h2 className="text-[53px] leading-[58px] font-bold text-[#f8fafc]">Downtown Ball Run</h2>
        </div>
        <button type="button" className="text-[39px] leading-[50px] font-bold text-[#f3cf73]">Hide</button>
      </div>
      <div className="mt-[19px] flex flex-col gap-[15px] text-[37px] leading-[54px] text-[#8f98aa]">
        <p>Tonight • 9:00 PM • 3.6 km away</p>
        <p>Downtown Kitchener • 10 of 10 filled</p>
        <p>Night run crew • 7 returning • Fast-fill host</p>
      </div>
      <ul className="mt-5 flex flex-wrap gap-[18px]">
        <Tag>Best if you already like the local hoops crowd</Tag>
        <Tag>Moderate</Tag>
        <Tag>4 crew overlap</Tag>
      </ul>
      <button type="button" className="mt-[18px] h-[138px] w-full rounded-[66px] bg-[#d8a63d] text-[44px] font-bold text-[#12100f]">
        Open Link Up
      </button>
    </section>
  );
}

function LinkUpCard({ area, title, selected }) {
  return (
    <article
      className={
        selected
          ? "w-[696px] shrink-0 rounded-[66px] border-[3px] border-[#e8c76a] bg-[#121b2c] px-[46px] py-[45px]"
          : "w-[696px] shrink-0 rounded-[66px] border-[3px] border-[#232d41] bg-[#182235] px-[46px] py-[45px]"
      }
    >
      <p className="text-[34px] leading-[42px] font-bold tracking-[2px] text-[#e8c76a] uppercase">{area}</p>
      <h3 className="mt-4 text-[48px] leading-[58px] font-bold whitespace-nowrap text-[#f8fafc]">{title}</h3>
    </article>
  );
}

export default function App() {
  return (
    <div className="relative flex h-screen flex-col overflow-hidden bg-[#050f1e] font-[Inter,sans-serif]">
      <StatusBar />
      <main className="min-h-0 flex-1 overflow-hidden px-[62px]">
        <section className="rounded-[66px] border-[3px] border-[#232d41] bg-[#182235] px-[46px] pt-[45px] pb-[46px]">
          <p className="text-[34px] leading-[42px] font-bold tracking-[2px] text-[#e8c76a]">MAP MODE</p>
          <h1 className="mt-[21px] text-[42px] leading-[54px] text-[#f5f7fb]">Browse the city first, then decide.</h1>
          <p className="mt-[22px] text-[39px] leading-[58px] text-[#8f98aa]">
            Tap pins, swipe the rail, or jump into full screen without losing your place.
          </p>
        </section>

        <nav className="mt-[47px] flex flex-wrap gap-[18px]" aria-label="Map controls">
          <Chip>Use my location</Chip>
          <Chip>Areas</Chip>
          <Chip>Zoom out</Chip>
          <Chip primary>Close map</Chip>
        </nav>

        <div className="relative mt-[47px] flex min-h-[1800px] flex-col overflow-hidden rounded-[63px] border-2 border-[#26384c]">
          <CityMap />
          <div className="absolute bottom-5 left-8 flex items-center text-white">
            <FaApple className="h-10 w-8" aria-hidden="true" />
            <span className="text-[42px] leading-[52px] font-medium">Maps</span>
            <a href="#legal" className="ml-7 text-[28px] text-[#aab3c8] underline">Legal</a>
          </div>
          <p className="absolute bottom-[48px] left-[46px] flex h-[92px] items-center rounded-full bg-[#050f1e]/90 px-10 text-[36px] font-semibold text-white">
            Focused Link Up
          </p>
          <p className="relative mt-[45px] ml-[46px] flex h-[92px] items-center self-start rounded-full border-2 border-[#1a2737] bg-[#040e1e]/90 px-[34px] text-[36px] font-bold text-[#f5f7fb]">
            1 active in Downtown Kitchener
          </p>
          <SelectedPanel />
        </div>

        <p className="mt-[47px] text-[39px] leading-[58px] text-[#8f98aa]">
          Allow location for sharper city ranking and faster area browsing.
        </p>

        <div className="mt-[46px] flex gap-[29px] overflow-hidden">
          <LinkUpCard area="Downtown Kitchener" title="Downtown Ball Run" selected />
          <LinkUpCard area="West Kitchener" title="Pickup Hockey at the Rink" />
        </div>
      </main>
      <footer className="h-[82px] shrink-0" />
    </div>
  );
}
